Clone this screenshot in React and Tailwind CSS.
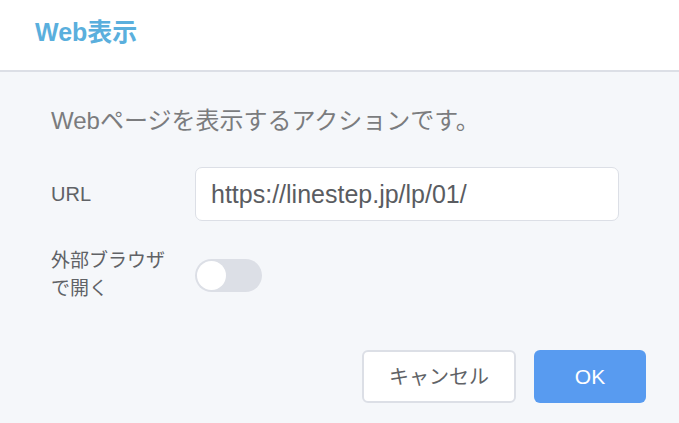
import React, { useState } from 'react';

const FONT = { fontFamily: '"Liberation Sans", "Noto Sans CJK JP", sans-serif' };

const Toggle = ({ on, onChange }) => {
    return (
        <button
            onClick={() => onChange(!on)}
            className={`w-[67px] h-[33px] rounded-full p-[2px] flex items-center transition-colors ${on ? 'bg-[#589bf0] justify-end' : 'bg-[#dcdfe6] justify-start'}`}
        >
            <span className="block w-[29px] h-[29px] rounded-full bg-white" />
        </button>
    );
};

export default function App() {
    const [external, setExternal] = useState(false);
    const [url, setUrl] = useState('https://linestep.jp/lp/01/');

    return (
        <div className="w-[679px] h-[423px] bg-[#f5f7fa] flex flex-col overflow-hidden" style={FONT}>
            {/* Header */}
            <div className="h-[72px] bg-white border-b-2 border-[#dcdfe6] flex items-center px-[35px] pb-[4px] shrink-0">
                <span className="text-[25px] font-bold text-[#5aafdd]">Web表示</span>
            </div>

            {/* Body */}
            <div className="flex flex-col pl-[51px] pr-[33px] pt-[33px]">
                <p className="text-[24px] leading-[32px] text-[#7b7c7e]">Webページを表示するアクションです。</p>

                <div className="flex items-center mt-[30px]">
                    <label className="w-[144px] text-[20px] leading-[28px] text-[#606266]">URL</label>
                    <input
                        value={url}
                        onChange={(e) => setUrl(e.target.value)}
                        className="w-[424px] h-[54px] bg-white border border-[#dcdfe6] rounded-[7px] px-[15px] text-[25px] text-[#5a5c61] outline-none"
                    />
                </div>

                <div className="flex items-center mt-[26px]">
                    <div className="w-[144px] pr-[20px] text-[19px] leading-[28px] text-[#606266]">外部ブラウザで開く</div>
                    <Toggle on={external} onChange={setExternal} />
                </div>

                {/* Footer buttons */}
                <div className="flex justify-end gap-[18px] mt-[47px]">
                    <button className="w-[154px] h-[53px] bg-white border-2 border-[#dcdfe6] rounded-[6px] text-[20px] text-[#606266]">
                        キャンセル
                    </button>
                    <button className="w-[112px] h-[53px] bg-[#589bf0] rounded-[6px] text-[21px] text-white">
                        OK
                    </button>
                </div>
            </div>
        </div>
    );
}
